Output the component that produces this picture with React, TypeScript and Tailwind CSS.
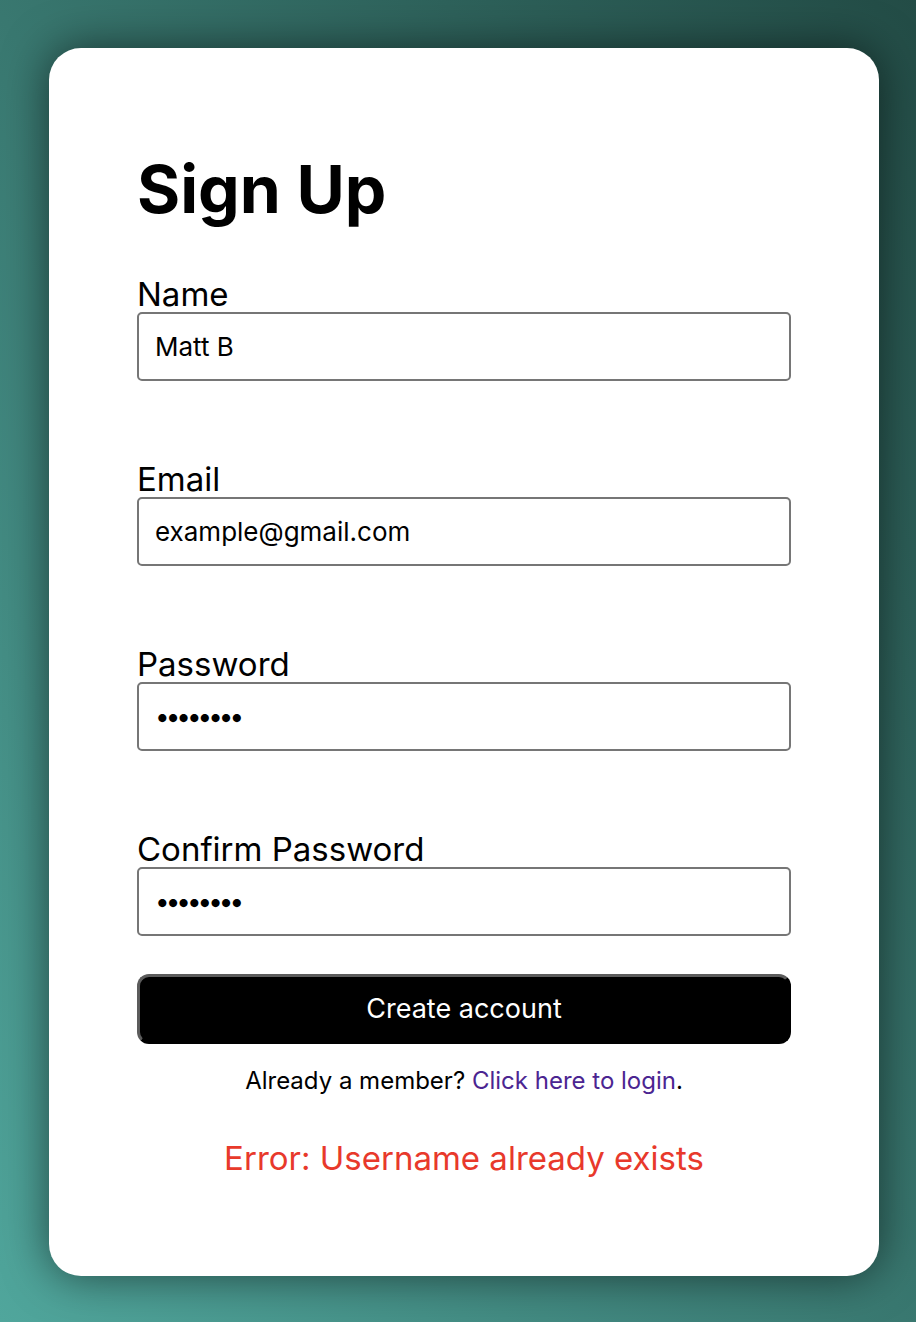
import React from 'react';

const fields = [
  { label: 'Name', type: 'text', value: 'Matt B' },
  { label: 'Email', type: 'email', value: 'example@gmail.com' },
  { label: 'Password', type: 'password', value: 'password' },
  { label: 'Confirm Password', type: 'password', value: 'password' },
];

const App: React.FC = () => {
  return (
    <div className="min-h-[1322px] w-full bg-linear-to-bl from-[#234c46] to-[#50a69c] pl-[49px] pt-[48px] font-['Inter',sans-serif] text-black">
      <div className="w-[830px] h-[1228px] bg-white rounded-[32px] shadow-[0_0_45px_rgba(0,0,0,0.55)] px-[88px] pt-[108px]">
        <h1 className="text-[66px] leading-[66px] font-bold">Sign Up</h1>

        <form className="mt-[54px]" onSubmit={(e) => e.preventDefault()}>
          {fields.map((f, i) => (
            <div key={f.label} className={i > 0 ? 'mt-[80px]' : ''}>
              <label className="block text-[33px] leading-[36px]">{f.label}</label>
              <input
                type={f.type}
                readOnly
                value={f.value}
                className={
                  f.type === 'password'
                    ? 'block w-full h-[69px] border-2 border-[#767676] rounded-[5px] px-[16px] text-[26px] tracking-[-4px] text-black outline-none'
                    : 'block w-full h-[69px] border-2 border-[#767676] rounded-[5px] px-[16px] text-[26px] text-black outline-none'
                }
              />
            </div>
          ))}

          <button
            type="submit"
            className="mt-[38px] block w-full h-[70px] bg-black text-white text-[27px] rounded-[12px] border-[3px] border-t-[#5c5c5c] border-l-[#5c5c5c] border-r-black border-b-black"
          >
            Create account
          </button>
        </form>

        <p className="mt-[21px] text-center text-[24px] leading-[32px]">
          Already a member? <a href="#" className="text-[#4b2591]">Click here to login</a>.
        </p>

        <p className="mt-[41px] text-center text-[33px] leading-[40px] text-[#e8392b]">
          Error: Username already exists
        </p>
      </div>
    </div>
  );
};

export default App;
